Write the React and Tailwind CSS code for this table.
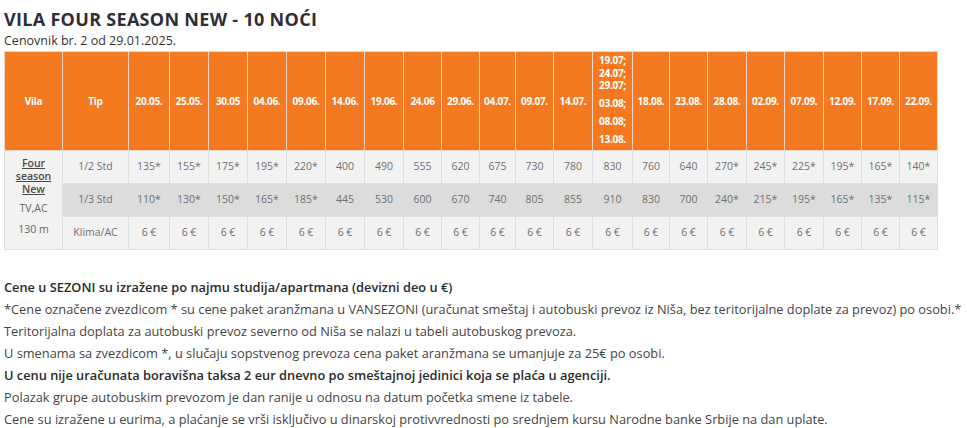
import React from 'react';

const dates = [
  '20.05.', '25.05.', '30.05', '04.06.', '09.06.', '14.06.', '19.06.', '24.06', '29.06.',
  '04.07.', '09.07.', '14.07.', 'BIG', '18.08.', '23.08.', '28.08.', '02.09.', '07.09.',
  '12.09.', '17.09.', '22.09.',
];

const widths = [58, 66, 41, 39, 39, 39, 39, 39, 39, 38, 38, 36, 38, 39, 40, 37, 38, 39, 38, 39, 38, 38, 38];

const rows = [
  {
    tip: '1/2 Std',
    bg: 'bg-[#f2f2f2]',
    prices: ['135*', '155*', '175*', '195*', '220*', '400', '490', '555', '620', '675', '730', '780', '830', '760', '640', '270*', '245*', '225*', '195*', '165*', '140*'],
  },
  {
    tip: '1/3 Std',
    bg: 'bg-[#dcdcdc]',
    prices: ['110*', '130*', '150*', '165*', '185*', '445', '530', '600', '670', '740', '805', '855', '910', '830', '700', '240*', '215*', '195*', '165*', '135*', '115*'],
  },
  {
    tip: 'Klima/AC',
    bg: 'bg-[#f2f2f2]',
    prices: Array(21).fill('6 €'),
  },
];

const notes = [
  { text: 'Cene u SEZONI su izražene po najmu studija/apartmana (devizni deo u €)', bold: true },
  { text: '*Cene označene zvezdicom * su cene paket aranžmana u VANSEZONI (uračunat smeštaj i autobuski prevoz iz Niša, bez teritorijalne doplate za prevoz) po osobi.*' },
  { text: 'Teritorijalna doplata za autobuski prevoz severno od Niša se nalazi u tabeli autobuskog prevoza.' },
  { text: 'U smenama sa zvezdicom *, u slučaju sopstvenog prevoza cena paket aranžmana se umanjuje za 25€ po osobi.' },
  { text: 'U cenu nije uračunata boravišna taksa 2 eur dnevno po smeštajnoj jedinici koja se plaća u agenciji.', bold: true },
  { text: 'Polazak grupe autobuskim prevozom je dan ranije u odnosu na datum početka smene iz tabele.' },
  { text: 'Cene su izražene u eurima, a plaćanje se vrši isključivo u dinarskoj protivvrednosti po srednjem kursu Narodne banke Srbije na dan uplate.' },
];

const HeadCell = ({ children }) => (
  <th className="border border-[#ecd6c6] bg-[#f47920] text-white text-[10px] font-bold tracking-[-0.3px] text-center align-middle p-0">
    {children}
  </th>
);

export default function App() {
  return (
    <div className="w-[967px] h-[428px] bg-white px-[4px] pt-[8px] font-['Open_Sans',sans-serif] text-[#3a3a3a] overflow-hidden">
      <h1 className="text-[18px] font-bold leading-[22px] text-[#2e2e38] tracking-[0.3px]">VILA FOUR SEASON NEW - 10 NOĆI</h1>
      <p className="text-[12.5px] leading-[18px] mt-[2px] text-[#333]">Cenovnik br. 2 od 29.01.2025.</p>

      <table className="table-fixed border-collapse w-[933px] mt-[1px]">
        <colgroup>
          {widths.map((w, i) => (
            <col key={i} style={{ width: w }} />
          ))}
        </colgroup>
        <thead>
          <tr className="h-[99px]">
            <HeadCell>Vila</HeadCell>
            <HeadCell>Tip</HeadCell>
            {dates.map((d) =>
              d === 'BIG' ? (
                <HeadCell key={d}>
                  <div className="leading-[12.5px]">19.07;<br />24.07;<br />29.07;</div>
                  <div className="leading-[18px] mt-[2px]">03.08;<br />08.08;<br />13.08.</div>
                </HeadCell>
              ) : (
                <HeadCell key={d}>{d}</HeadCell>
              )
            )}
          </tr>
        </thead>
        <tbody className="text-[10.5px] text-[#707070]">
          {rows.map((r, ri) => (
            <tr key={r.tip} className={`h-[33px] ${r.bg}`}>
              {ri === 0 && (
                <td rowSpan={3} className="border border-[#dedede] bg-[#f2f2f2] align-top text-center pt-[6px] text-[#666]">
                  <div className="underline font-semibold leading-[13px] text-[#4a4a4a]">Four<br />season<br />New</div>
                  <div className="leading-[21px] mt-[2px]">TV,AC<br />130 m</div>
                </td>
              )}
              <td className="border border-[#dedede] text-center">{r.tip}</td>
              {r.prices.map((p, i) => (
                <td key={i} className="border border-[#dedede] text-center">{p}</td>
              ))}
            </tr>
          ))}
        </tbody>
      </table>

      <div className="mt-[26px] text-[12.8px] leading-[22px] text-[#444]">
        {notes.map((n, i) => (
          <p key={i} className={n.bold ? 'font-semibold text-[#2a2a2a]' : ''}>{n.text}</p>
        ))}
      </div>
    </div>
  );
}
